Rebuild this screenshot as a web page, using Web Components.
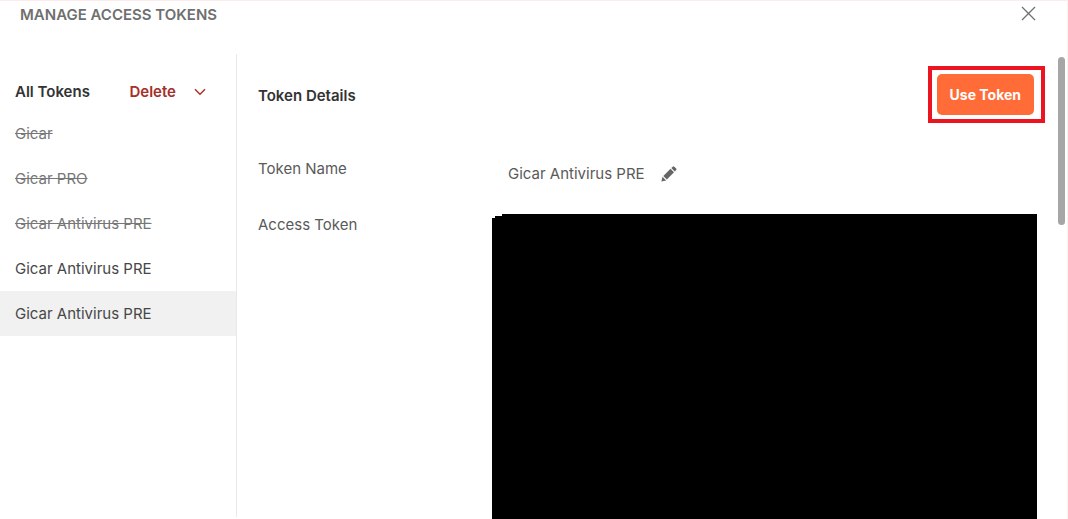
<!DOCTYPE html>
<html lang="en">
<head>
<meta charset="utf-8">
<meta name="viewport" content="width=device-width, initial-scale=1">
<title>Manage Access Tokens</title>
<style>
  body { margin: 0; background: #fff; color: #4a4a4a; font: 15px/20px Inter, "Liberation Sans", sans-serif; }
</style>
</head>
<body>
<token-manager>
  <dialog-header slot="header">MANAGE ACCESS TOKENS</dialog-header>
  <token-list slot="list">
    <token-item expired>Gicar</token-item>
    <token-item expired>Gicar PRO</token-item>
    <token-item expired>Gicar Antivirus PRE</token-item>
    <token-item>Gicar Antivirus PRE</token-item>
    <token-item selected>Gicar Antivirus PRE</token-item>
  </token-list>
  <token-details slot="details">
    <detail-row label="Token Name"><editable-name>Gicar Antivirus PRE</editable-name></detail-row>
    <detail-row label="Access Token" fill><redacted-block></redacted-block></detail-row>
  </token-details>
</token-manager>
<script>
const define = (name, markup, setup) => {
  const template = document.createElement('template');
  template.innerHTML = '<style>*{box-sizing:border-box}:host{box-sizing:border-box}button{font:inherit;color:inherit;background:none;border:0;padding:0;margin:0;cursor:pointer}svg{display:block}h1,h2{margin:0;font:inherit}</style>' + markup;
  customElements.define(name, class extends HTMLElement {
    constructor() {
      super();
      this.attachShadow({ mode: 'open' }).append(template.content.cloneNode(true));
    }
    connectedCallback() { if (setup) setup(this, this.shadowRoot); }
  });
};

define('token-manager', `
  <style>
    :host { display: flex; flex-direction: column; height: 100vh; border-top: 1px solid #fdeaea; border-right: 1px solid #fdf0f0; overflow: hidden; }
    .body { flex: 1; min-height: 0; display: flex; }
    ::slotted([slot=details]) { flex: 1; min-width: 0; }
  </style>
  <slot name="header"></slot>
  <div class="body"><slot name="list"></slot><slot name="details"></slot></div>`);

define('dialog-header', `
  <style>
    :host { display: flex; justify-content: space-between; align-items: flex-start; padding: 4px 31px 0 20px; height: 53px; flex: none; }
    h1 { color: #6f6f6f; font-weight: 600; }
    button { padding-top: 1px; }
  </style>
  <h1><slot></slot></h1>
  <button aria-label="Close"><svg width="15" height="15" viewBox="0 0 15 15" fill="none" stroke="#707070" stroke-width="1.3"><path d="M1 1 14 14M14 1 1 14"/></svg></button>`);

define('token-list', `
  <style>
    :host { display: block; width: 237px; flex: none; border-right: 1px solid #e9e9e9; padding-top: 19px; margin-bottom: 2px; }
    header { display: flex; align-items: center; height: 38px; padding: 0 30px 0 15px; }
    h2 { flex: 1; color: #333; font-weight: 600; }
    button { display: flex; align-items: center; gap: 18px; color: #a3312a; font-weight: 600; }
  </style>
  <header>
    <h2>All Tokens</h2>
    <button>Delete <svg width="12" height="8" viewBox="0 0 12 8" fill="none" stroke="currentColor" stroke-width="1.4"><path d="M1 1.2 6 6.3 11 1.2"/></svg></button>
  </header>
  <nav aria-label="Tokens"><slot></slot></nav>`);

define('token-item', `
  <style>
    :host { display: block; color: #474747; }
    :host([selected]) { background: #f1f1f1; }
    :host([expired]) { color: #777; }
    :host([expired]) button { text-decoration: line-through; }
    button { display: block; width: 100%; height: 45px; padding: 0 15px; text-align: left; }
  </style>
  <button><slot></slot></button>`);

define('token-details', `
  <style>
    :host { display: flex; justify-content: space-between; padding-left: 21px; }
    section { flex: 1; min-width: 0; display: flex; flex-direction: column; }
    header { display: flex; justify-content: space-between; align-items: center; flex: none; padding-top: 12px; margin-bottom: 35px; }
    h2 { color: #333; font-weight: 600; padding-top: 2px; }
    .highlight { border: 4px solid #eb1420; padding: 4px 7px 4px 5px; margin-right: 13px; }
    .use { display: block; height: 41px; padding: 0 13px; border-radius: 5px; background: #ff6c37; color: #fff; font-size: 14px; font-weight: 700; }
    .scroll { width: 7px; height: 168px; margin: 3px 2px 0 0; border-radius: 4px; background: #a6a6a6; flex: none; }
  </style>
  <section>
    <header><h2>Token Details</h2><div class="highlight"><button class="use">Use Token</button></div></header>
    <slot></slot>
  </section>
  <div class="scroll"></div>`);

define('detail-row', `
  <style>
    :host { display: grid; grid-template-columns: 234px 1fr; flex: none; min-height: 56px; margin-right: 21px; color: #5a5a5a; }
    :host([fill]) { flex: 1; }
    .label { padding-top: 1px; }
  </style>
  <div class="label" id="label"></div><div role="group" aria-labelledby="label"><slot></slot></div>`,
  (host, root) => { root.querySelector('.label').textContent = host.getAttribute('label'); });

define('editable-name', `
  <style>
    :host { display: flex; align-items: center; gap: 16px; padding: 6px 0 0 16px; }
  </style>
  <span><slot></slot></span>
  <button aria-label="Edit token name"><svg width="16" height="16" viewBox="0 0 16 16" fill="#666"><path d="M0.4 15.6 1.5 10.7 5.1 14.4ZM2.3 9.9 9.5 2.8 13 6.3 5.9 13.5ZM10.3 2 11.7 0.7Q12.5 0 13.3 0.7L15.2 2.6Q15.9 3.4 15.2 4.1L13.8 5.5Z"/></svg></button>`);

define('redacted-block', `
  <style>
    :host { display: block; height: 100%; min-height: 200px; background: #000;
      clip-path: polygon(0 4px, 3px 4px, 3px 2px, 10px 2px, 10px 0, 100% 0, 100% 100%, 0 100%); }
  </style>`);
</script>
</body>
</html>
